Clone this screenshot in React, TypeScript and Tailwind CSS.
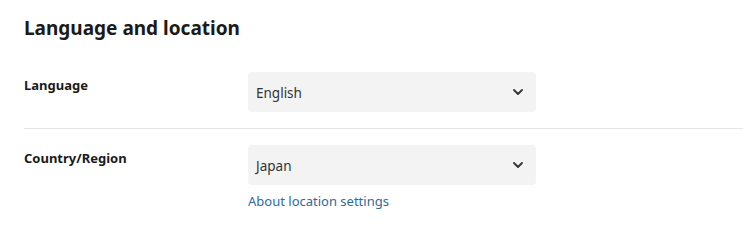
import React from 'react';

function Chevron() {
  return (
    <svg width="10" height="6" viewBox="0 0 10 6" className="text-[#333]">
      <path d="M1 1l4 4 4-4" fill="none" stroke="currentColor" strokeWidth="1.8" strokeLinecap="round" strokeLinejoin="round" />
    </svg>
  );
}

function Select({ value }: { value: string }) {
  return (
    <div className="flex h-[40px] w-[288px] items-center justify-between rounded-[4px] bg-[#f3f3f3] pl-[8px] pr-[13px] text-[13.5px] text-[#333]">
      <span className="pt-[2px]">{value}</span>
      <Chevron />
    </div>
  );
}

export default function App() {
  return (
    <div className="min-h-[249px] bg-white pl-[24px] font-['Noto_Sans','Open_Sans',sans-serif] text-[#1a1a1a]">
      <h1 className="pt-[14px] text-[19px] font-bold leading-[28px]">Language and location</h1>
      <div className="mt-[30px] flex border-b border-[#e5e5e5] pb-[16px]">
        <div className="w-[224px] pt-[4px] text-[13px] font-bold">Language</div>
        <Select value="English" />
      </div>
      <div className="flex pt-[16px]">
        <div className="w-[224px] pt-[4px] text-[13px] font-bold">Country/Region</div>
        <div className="flex flex-col">
          <Select value="Japan" />
          <a className="mt-[7px] text-[13px] text-[#2e6b9c]">About location settings</a>
        </div>
      </div>
    </div>
  );
}
